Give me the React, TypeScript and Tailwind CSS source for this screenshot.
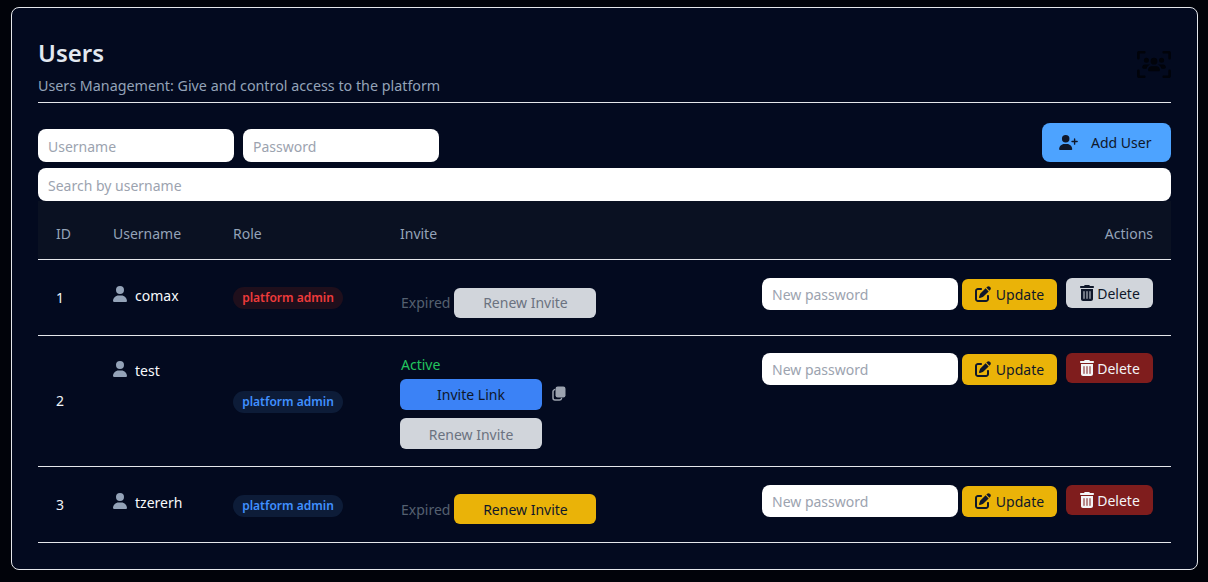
import { FaPenToSquare, FaTrashCan, FaUser, FaUserPlus, FaUsersViewfinder } from "react-icons/fa6";

const rows = [
  { id: 1, name: "comax", badge: "red", invite: "expiredGray", del: "gray" },
  { id: 2, name: "test", badge: "blue", invite: "active", del: "red" },
  { id: 3, name: "tzererh", badge: "blue", invite: "expiredYellow", del: "red" },
];

function CopyIcon() {
  return (
    <svg viewBox="0 0 14 15" className="-mt-[1px] ml-[10px] h-[15px] w-[14px] text-[#9ca3af]" fill="none">
      <rect x="3.5" y="0.5" width="10" height="11" rx="2.2" fill="currentColor" />
      <path d="M2.6 3.6 C1.6 3.9 1 4.6 1 5.6 V12 C1 13.2 1.8 14 3 14 H7.5 C8.6 14 9.3 13.4 9.5 12.6" stroke="currentColor" strokeWidth="1.5" strokeLinecap="round" />
    </svg>
  );
}

function Invite({ kind }: { kind: string }) {
  if (kind === "active") {
    return (
      <div className="-mb-[1px] flex flex-col items-start">
        <span className="h-[25px] pl-[1px] text-[14px] leading-[22px] text-[#22c55e]">Active</span>
        <div className="flex items-center">
          <button className="h-[31px] w-[142px] rounded-md bg-[#3b82f6] text-[14px] text-[#0f172a]">Invite Link</button>
          <CopyIcon />
        </div>
        <button className="mt-[8px] h-[31px] w-[142px] rounded-md bg-[#d1d5db] pt-[2px] text-[14px] text-[#6b7280]">Renew Invite</button>
      </div>
    );
  }
  const yellow = kind === "expiredYellow";
  return (
    <div className={`ml-[1px] flex items-center gap-[4px] ${yellow ? "pt-[9px]" : "-mb-[1px] pt-[10px]"}`}>
      <span className={`text-[14px] leading-[30px] text-[#556070] ${yellow ? "translate-y-[1px]" : ""}`}>Expired</span>
      <button className={`h-[30px] w-[142px] rounded-md text-[14px] ${yellow ? "bg-[#eab308] pt-[1px] text-[#0f172a]" : "bg-[#d1d5db] text-[#6b7280]"}`}>Renew Invite</button>
    </div>
  );
}

export default function App() {
  return (
    <div className="h-[582px] w-[1208px] overflow-hidden bg-[#01030a] pb-[12px] pl-[11px] pr-[10px] pt-[7px] font-['Noto_Sans',sans-serif]">
      <div className="h-[563px] rounded-lg border border-[#e5e7eb] bg-[#030a1f] px-[26px] pt-[29px]">
        <div className="flex items-center justify-between border-b border-[#e5e7eb] pb-[6px]">
          <div>
            <h1 className="text-[24px] font-semibold leading-[32px] text-[#e2e8f0]">Users</h1>
            <p className="mt-[7px] text-[14.3px] leading-[20px] text-[#94a3b8]">Users Management: Give and control access to the platform</p>
          </div>
          <FaUsersViewfinder className="-mt-[5px] h-[27px] w-[34px] text-[#01030a]" />
        </div>

        <div className="mt-[20px] flex items-end justify-between">
          <div className="flex gap-[9px]">
            <input placeholder="Username" className="h-[33px] w-[196px] rounded-lg bg-white px-[10px] pt-[2px] text-[14px] placeholder:text-[#9ca3af]" />
            <input placeholder="Password" className="h-[33px] w-[196px] rounded-lg bg-white px-[10px] pt-[2px] text-[14px] placeholder:text-[#9ca3af]" />
          </div>
          <button className="flex h-[39px] w-[129px] items-center rounded-lg bg-[#4da3ff] pl-[17px] text-[14px] text-[#0f172a]">
            <FaUserPlus className="h-[15px] w-[19px]" />
            <span className="ml-[13px]">Add User</span>
          </button>
        </div>
        <input placeholder="Search by username" className="mt-[6px] block h-[33px] w-full rounded-lg bg-white px-[10px] pt-[2px] text-[14px] placeholder:text-[#9ca3af]" />

        <table className="w-full table-fixed border-collapse text-[14px]">
          <colgroup>
            <col className="w-[57px]" />
            <col className="w-[120px]" />
            <col className="w-[167px]" />
            <col className="w-[362px]" />
            <col />
          </colgroup>
          <thead>
            <tr className="h-[58px] border-b border-[#e5e7eb] bg-[#0a1122] text-left text-[#94a3b8]">
              <th className="pl-[18px] pt-[8px] font-normal">ID</th>
              <th className="pl-[18px] pt-[8px] font-normal">Username</th>
              <th className="pl-[18px] pt-[8px] font-normal">Role</th>
              <th className="pl-[18px] pt-[8px] font-normal">Invite</th>
              <th className="pr-[18px] pt-[8px] text-right font-normal">Actions</th>
            </tr>
          </thead>
          <tbody>
            {rows.map((r) => (
              <tr key={r.id} className="border-b border-[#e5e7eb]">
                <td className="pl-[18px] align-middle text-[#f1f5f9]">{r.id}</td>
                <td className={`pl-[18px] align-top ${r.id === 2 ? "pt-[25px]" : "pt-[26px]"}`}>
                  <div className="flex items-center gap-[8px] text-[#f8fafc]">
                    <FaUser className="-mt-[4px] h-[16px] w-[14px] text-[#94a3b8]" />
                    <span className="leading-[20px]">{r.name}</span>
                  </div>
                </td>
                <td className={`pl-[18px] align-middle ${r.id === 1 ? "" : "pt-[2px]"}`}>
                  <span className={`inline-flex h-[22px] w-[110px] items-center justify-center rounded-full text-[12px] font-semibold ${r.badge === "red" ? "bg-[#1f0f1c] text-[#ef3b3b]" : "bg-[#0d1c38] text-[#4090ff]"}`}>platform admin</span>
                </td>
                <td className="py-[18px] pl-[18px] align-top">
                  <Invite kind={r.invite} />
                </td>
                <td className={`pr-[18px] align-top ${r.id === 2 ? "pt-[17px]" : "pt-[18px]"}`}>
                  <div className="flex items-start justify-end">
                    <input placeholder="New password" className="h-[32px] w-[196px] rounded-lg bg-white px-[10px] pt-[2px] text-[14px] placeholder:text-[#9ca3af]" />
                    <button className="ml-[4px] mt-[1px] flex h-[31px] w-[95px] items-center justify-center gap-[5px] rounded-md bg-[#eab308] text-[14px] text-[#0f172a]">
                      <FaPenToSquare className="size-[16px]" />
                      Update
                    </button>
                    <button className={`ml-[9px] flex h-[30px] w-[87px] items-center justify-center gap-[2px] rounded-md text-[14px] ${r.del === "gray" ? "bg-[#d1d5db] text-[#0f172a]" : "bg-[#7f1d1d] text-[#f3f4f6]"}`}>
                      <FaTrashCan className="size-[16px]" />
                      <span className="pt-[2px]">Delete</span>
                    </button>
                  </div>
                </td>
              </tr>
            ))}
          </tbody>
        </table>
      </div>
    </div>
  );
}
